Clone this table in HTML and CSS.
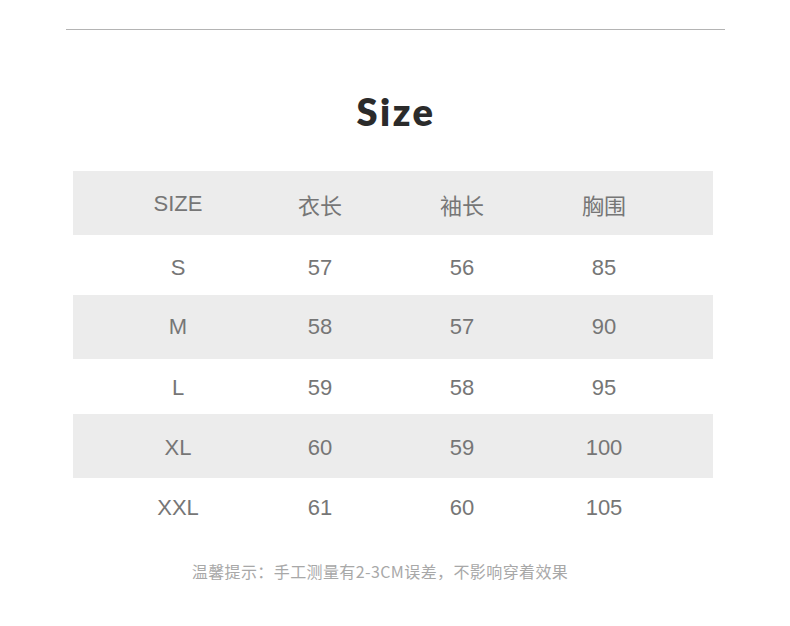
FILE: index.html
```html
<!DOCTYPE html>
<html lang="zh">
<head>
<meta charset="utf-8">
<link rel="stylesheet" href="styles.css">
</head>
<body>
<div class="page">
  <div class="rule"></div>
  <h1 class="title">Size</h1>
  <div class="table">
    <div class="row head">
      <div class="cell">SIZE</div><div class="cell">衣长</div><div class="cell">袖长</div><div class="cell">胸围</div>
    </div>
    <div class="row r-s">
      <div class="cell">S</div><div class="cell">57</div><div class="cell">56</div><div class="cell">85</div>
    </div>
    <div class="row shade r-m">
      <div class="cell">M</div><div class="cell">58</div><div class="cell">57</div><div class="cell">90</div>
    </div>
    <div class="row r-l">
      <div class="cell">L</div><div class="cell">59</div><div class="cell">58</div><div class="cell">95</div>
    </div>
    <div class="row shade r-xl">
      <div class="cell">XL</div><div class="cell">60</div><div class="cell">59</div><div class="cell">100</div>
    </div>
    <div class="row r-xxl">
      <div class="cell">XXL</div><div class="cell">61</div><div class="cell">60</div><div class="cell">105</div>
    </div>
  </div>
  <p class="note">温馨提示：手工测量有2-3CM误差，不影响穿着效果</p>
</div>
</body>
</html>
```
FILE: styles.css
```css
html, body {
  margin: 0;
  padding: 0;
  background: #fff;
}
.page {
  width: 790px;
  height: 626px;
  padding-top: 29px;
  box-sizing: border-box;
}
.rule {
  margin-left: 66px;
  width: 659px;
  height: 1px;
  background: #b4b4b4;
}
.title {
  margin: 61px 0 0 0;
  height: 40px;
  line-height: 40px;
  text-align: center;
  padding-left: 2px;
  font-family: "Lato", "Noto Sans", sans-serif;
  font-weight: 800;
  font-size: 38px;
  letter-spacing: 2.5px;
  color: #2b2b2b;
}
.table {
  margin: 40px 0 0 73px;
  width: 640px;
}
.row {
  display: grid;
  grid-template-columns: repeat(4, 142px);
  padding-left: 34px;
  align-items: center;
  font-family: "Liberation Sans", "Noto Sans CJK SC", sans-serif;
  font-size: 22px;
  color: #767676;
  box-sizing: border-box;
}
.cell {
  text-align: center;
}
.head, .shade {
  background: #ececec;
}
.head { height: 64px; padding-top: 1px; }
.r-s { height: 60px; padding-top: 6px; }
.r-m { height: 64px; }
.r-l { height: 55px; padding-top: 2px; }
.r-xl { height: 64px; padding-top: 3px; }
.r-xxl { height: 61px; padding-bottom: 2px; }
.note {
  margin: 20px 0 0 0;
  text-align: center;
  padding-right: 30px;
  font-family: "Noto Sans CJK SC", "Liberation Sans", sans-serif;
  font-size: 16px;
  letter-spacing: 0.4px;
  color: #a8a8a8;
}
```
